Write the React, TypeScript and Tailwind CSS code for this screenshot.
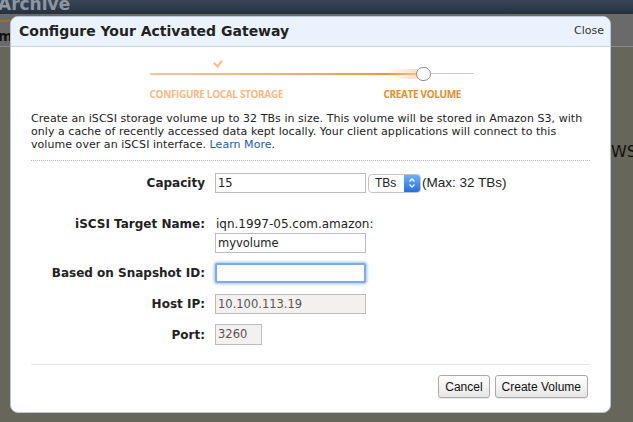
import React from "react";

const verdana = { fontFamily: '"DejaVu Sans", Verdana, sans-serif' };

function Stepper() {
  return (
    <div className="mx-auto w-[324px] pt-[13px] pl-[1px]" style={{ fontFamily: '"Open Sans", sans-serif' }}>
      <div className="relative h-[26px]">
        <svg className="absolute left-[63px] top-[0px]" width="10" height="8" viewBox="0 0 10 8">
          <path d="M1.5 3.5 L4.5 6.5 L8.5 1.5" fill="none" stroke="#f8bf86" strokeWidth="2.2" strokeLinecap="round" strokeLinejoin="round" />
        </svg>
        <div className="absolute left-0 top-[13px] h-[2px] w-[266px] bg-gradient-to-r from-[#f9c592] via-[#f6b070] to-[#f08c2c]" />
        <div className="absolute left-[236px] top-[9px] h-[10px] w-[34px] bg-gradient-to-r from-transparent to-[#fbd4a8] opacity-80 rounded-l-full" />
        <div className="absolute left-[278px] top-[13px] h-[1px] w-[46px] bg-[#c9c9c9]" />
        <div className="absolute left-[266px] top-[7px] h-[14px] w-[15px] rounded-full border-[1.5px] border-[#8c8c8c] bg-white" />
      </div>
      <div className="relative h-[16px] text-[10px] font-bold leading-none tracking-[-0.35px]">
        <span className="absolute left-0 top-[3px] text-[#f7b985]">CONFIGURE LOCAL STORAGE</span>
        <span className="absolute left-[234px] top-[3px] text-[#f08a24]">CREATE VOLUME</span>
      </div>
    </div>
  );
}

function Label({ children, className = "" }: { children: React.ReactNode; className?: string }) {
  return (
    <div className={"w-[174px] shrink-0 text-right text-[12px] font-bold text-[#222] " + className} style={verdana}>
      {children}
    </div>
  );
}

function TextInput({ value, width = "w-[151px]", disabled = false, focused = false }: { value: string; width?: string; disabled?: boolean; focused?: boolean }) {
  return (
    <div
      className={
        "h-[20px] " +
        width +
        " flex items-center px-[2px] text-[11.5px] " +
        (focused
          ? "border-2 border-[#7aacf0] shadow-[0_0_3px_1px_#9cc3f5] rounded-[2px] bg-white"
          : disabled
          ? "border border-[#bdbdbd] bg-[#f2f1f0] text-[#555]"
          : "border border-[#bdbdbd] bg-white text-[#222]")
      }
      style={verdana}
    >
      {value}
    </div>
  );
}

export default function App() {
  return (
    <div className="relative w-[633px] h-[422px] overflow-hidden bg-[#66665a]">
      <div className="h-[14px] bg-gradient-to-b from-[#3a4658] to-[#26313f] relative overflow-hidden">
        <span className="absolute left-[-2px] top-[-8px] text-[17px] font-bold text-[#8e96a1]" style={verdana}>Archive</span>
      </div>
      <div className="h-[33px] bg-[#6a6a6a] border-b border-[#8a8a88] relative">
        <div className="absolute left-0 top-[6px] h-[2px] w-[12px] bg-[#a07020]" />
        <span className="absolute left-[-2px] top-[12px] text-[14px] font-bold text-[#111]" style={verdana}>m</span>
      </div>
      <span className="absolute left-[611px] top-[140px] text-[16px] text-[#111]" style={verdana}>WS</span>

      <div className="absolute left-[10px] top-[16px] w-[601px] h-[397px] rounded-[8px] bg-white border border-[#b9c7d6] overflow-hidden flex flex-col">
        <div className="h-[30px] shrink-0 bg-[#eaf3fd] border-b border-[#c6dbf0] flex items-center justify-between pl-[8px] pr-[6px]">
          <span className="text-[14px] font-bold text-[#222]" style={verdana}>Configure Your Activated Gateway</span>
          <span className="text-[11px] text-[#333]" style={verdana}>Close</span>
        </div>
        <Stepper />
        <div className="px-[20px] pt-[10px]">
          <p className="text-[11px] leading-[13px] text-[#222] tracking-[0.05px]" style={verdana}>
            Create an iSCSI storage volume up to 32 TBs in size. This volume will be stored in Amazon S3, with only a cache of recently accessed data kept locally. Your client applications will connect to this volume over an iSCSI interface. <span className="text-[#1b5ca3]">Learn More</span>.
          </p>
          <div className="mt-[9px] border-t border-dotted border-[#b5b5b5]" />

          <div className="mt-[12px] flex items-center gap-[10px]">
            <Label>Capacity</Label>
            <TextInput value="15" />
            <div className="flex items-center text-[12px] text-[#222]" style={verdana}>
              <div className="ml-[-8px] h-[19px] w-[53px] flex items-center rounded-[4px] border border-[#c4c4c4] bg-white overflow-hidden">
                <span className="flex-1 pl-[6px] text-[12px]" style={{ fontFamily: '"Liberation Sans", Arial, sans-serif' }}>TBs</span>
                <div className="h-full w-[16px] flex items-center justify-center bg-gradient-to-b from-[#6cb0fa] to-[#1f6fe6]">
                  <svg width="8" height="12" viewBox="0 0 8 12">
                    <path d="M1.5 4.5 L4 2 L6.5 4.5" fill="none" stroke="white" strokeWidth="1.3" />
                    <path d="M1.5 7.5 L4 10 L6.5 7.5" fill="none" stroke="white" strokeWidth="1.3" />
                  </svg>
                </div>
              </div>
              <span className="ml-[1px] text-[13.5px]" style={{ fontFamily: '"Liberation Sans", Arial, sans-serif' }}>(Max: 32 TBs)</span>
            </div>
          </div>

          <div className="mt-[23px] flex gap-[10px]">
            <Label className="leading-[16px]">iSCSI Target Name:</Label>
            <div className="flex flex-col">
              <span className="text-[12px] leading-[16px] text-[#222] pl-[1px]" style={verdana}>iqn.1997-05.com.amazon:</span>
              <div className="mt-[1px]"><TextInput value="myvolume" /></div>
            </div>
          </div>

          <div className="mt-[10px] flex items-center gap-[10px]">
            <Label>Based on Snapshot ID:</Label>
            <TextInput value="" focused />
          </div>

          <div className="mt-[11px] flex items-center gap-[10px]">
            <Label>Host IP:</Label>
            <TextInput value="10.100.113.19" disabled />
          </div>

          <div className="mt-[10px] flex items-center gap-[10px]">
            <Label>Port:</Label>
            <div className="h-[21px] w-[47px] flex items-center px-[2px] text-[11.5px] border border-[#bdbdbd] bg-[#f2f1f0] text-[#555]" style={verdana}>3260</div>
          </div>

          <div className="mt-[19px] border-t border-[#e6e6e6]" />
          <div className="mt-[10px] flex justify-end gap-[5px] pr-[2px]" style={{ fontFamily: '"Liberation Sans", Arial, sans-serif' }}>
            <button className="h-[23px] px-[6px] rounded-[3px] border border-[#aaaaaa] bg-gradient-to-b from-white to-[#e6e6e6] text-[12px] text-[#111] shadow-[0_1px_1px_rgba(0,0,0,0.1)]">Cancel</button>
            <button className="h-[23px] px-[6px] rounded-[3px] border border-[#aaaaaa] bg-gradient-to-b from-white to-[#e6e6e6] text-[12px] text-[#111] shadow-[0_1px_1px_rgba(0,0,0,0.1)]">Create Volume</button>
          </div>
        </div>
      </div>
    </div>
  );
}
